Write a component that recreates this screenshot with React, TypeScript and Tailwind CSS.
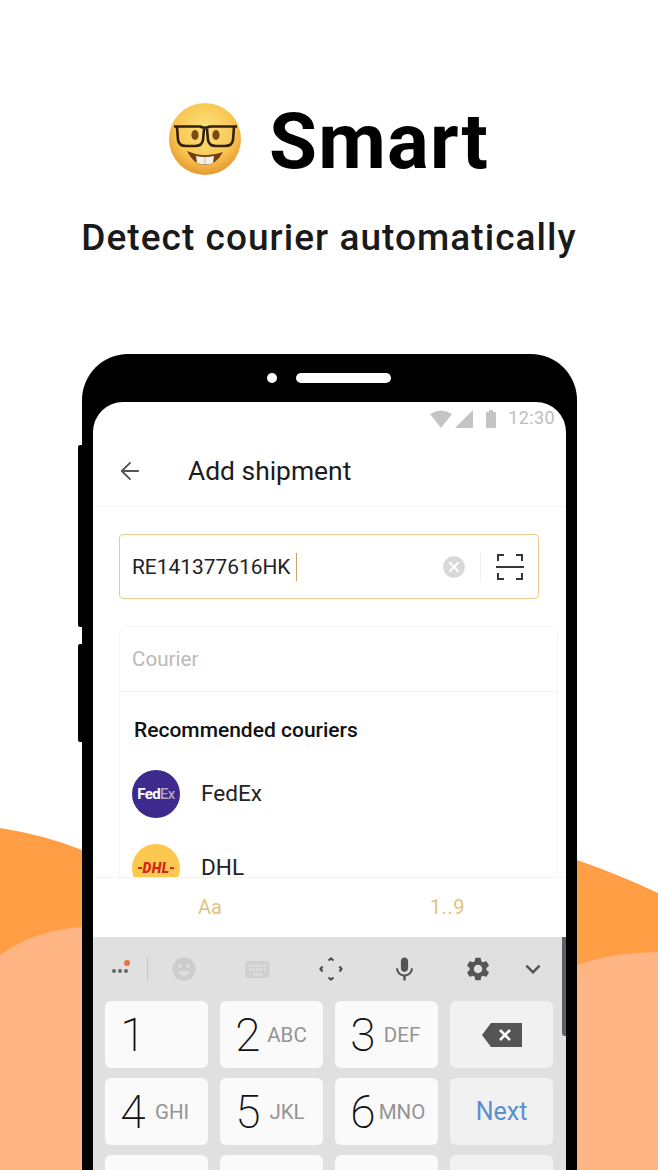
import { ArrowLeft } from "lucide-react";
import {
  MdCancel,
  MdEmojiEmotions,
  MdKeyboard,
  MdKeyboardArrowDown,
  MdMic,
  MdSettings,
} from "react-icons/md";

const keys = [
  { digit: "1", sub: "" },
  { digit: "2", sub: "ABC" },
  { digit: "3", sub: "DEF" },
  null,
  { digit: "4", sub: "GHI" },
  { digit: "5", sub: "JKL" },
  { digit: "6", sub: "MNO" },
  null,
];

const NerdEmoji = () => (
  <svg viewBox="0 0 74 74" className="h-[74px] w-[74px] shrink-0">
    <defs>
      <radialGradient id="face" cx="50%" cy="38%" r="62%">
        <stop offset="0%" stopColor="#fde37e" />
        <stop offset="65%" stopColor="#f9c652" />
        <stop offset="100%" stopColor="#e5982e" />
      </radialGradient>
    </defs>
    <circle cx="37" cy="37" r="36" fill="url(#face)" />
    <path d="M19 49 Q37 57 55 50 Q48 63 37 63 Q26 63 19 49Z" fill="#6e3d12" />
    <path d="M28 54 Q37 56 46 54 L45 61 Q37 64 29 61Z" fill="#f3efe6" />
    <path d="M37 55 V63" stroke="#b9ab94" strokeWidth="0.8" />
    <ellipse cx="27" cy="33" rx="3.6" ry="5" fill="#7a4a18" />
    <ellipse cx="48" cy="33" rx="3.6" ry="5" fill="#7a4a18" />
    <path
      d="M6 24.5 H32 Q37 27 42 24.5 H69 M9 25 L10 38 Q11 44 18 44 H27 Q34 44 35 38 L36 27 M39 27 L40 38 Q41 44 48 44 H57 Q64 44 65 38 L66 25"
      fill="none"
      stroke="#33200d"
      strokeWidth="2.6"
    />
  </svg>
);

const WifiFilled = () => (
  <svg viewBox="0 0 22 18" className="h-[18px] w-[22px]" fill="#c4c4c4">
    <path d="M0 4 Q11 -3 22 4 L11 18Z" />
  </svg>
);

const SignalFilled = () => (
  <svg viewBox="0 0 18 18" className="ml-[3px] h-[18px] w-[18px]" fill="#c4c4c4">
    <path d="M18 0 V18 H0Z" />
  </svg>
);

const ScanIcon = () => (
  <svg viewBox="0 0 28 28" className="h-[28px] w-[28px]" fill="none" stroke="#33373d" strokeWidth="2">
    <path d="M2 8 V2 H8 M20 2 H26 V8 M2 20 V26 H8 M20 26 H26 V20" />
    <path d="M0 14 H28" />
  </svg>
);

const MoveIcon = () => (
  <svg viewBox="0 0 24 24" className="h-[24px] w-[24px]" fill="none" stroke="#4d4d4d" strokeWidth="2.2">
    <path d="M9.5 3.5 L12 1.5 L14.5 3.5 M9.5 20.5 L12 22.5 L14.5 20.5 M3.5 9.5 L1.5 12 L3.5 14.5 M20.5 9.5 L22.5 12 L20.5 14.5" />
  </svg>
);

const BackspaceIcon = () => (
  <svg viewBox="0 0 40 24" className="h-[24px] w-[40px]">
    <path d="M9 0 H40 V24 H9 L0 12Z" fill="#555" />
    <path d="M18 7 L28 17 M28 7 L18 17" stroke="#fff" strokeWidth="2.6" />
  </svg>
);

export default function App() {
  return (
    <div className="relative h-[1170px] w-[658px] overflow-hidden bg-white font-['Roboto',sans-serif]">
      {/* orange waves behind the phone */}
      <svg viewBox="0 0 658 1170" className="absolute inset-0 h-full w-full">
        <path d="M0 828 Q45 835 82 850 L82 1170 L0 1170Z" fill="#ff9e44" />
        <path d="M577 860 Q620 875 658 893 L658 1170 L577 1170Z" fill="#ff9e44" />
        <path d="M0 955 Q35 930 82 927 L82 1170 L0 1170Z" fill="#ffb583" />
        <path d="M577 965 Q610 953 658 952 L658 1170 L577 1170Z" fill="#ffb583" />
      </svg>

      <div className="relative">
        <div className="flex h-[180px] items-end pl-[168px]">
          <div className="mb-[4px]">
            <NerdEmoji />
          </div>
          <h1 className="ml-[27px] text-[78px] leading-[76px] font-bold tracking-[1.2px] text-black">Smart</h1>
        </div>
        <p className="mt-[33px] text-center text-[37px] leading-[50px] font-medium tracking-[1.05px] text-[#1a1a1a]">
          Detect courier automatically
        </p>

        {/* phone */}
        <div className="relative mt-[91px] ml-[82px] w-[495px] rounded-t-[46px] bg-black px-[11px] pt-[48px]">
          <div className="absolute top-[91px] -left-[4px] h-[182px] w-[4px] rounded-l-[2px] bg-black" />
          <div className="absolute top-[290px] -left-[4px] h-[98px] w-[4px] rounded-l-[2px] bg-black" />
          <div className="absolute top-[19px] left-[185px] h-[10px] w-[10px] rounded-full bg-white" />
          <div className="absolute top-[19px] left-[214px] h-[10px] w-[95px] rounded-full bg-white" />

          <div className="h-[768px] overflow-hidden rounded-t-[30px] bg-white">
            <div className="flex h-[35px] items-end justify-end pr-[11px] pb-[7px] text-[#bdbdbd]">
              <span className="mb-[2px] flex">
                <WifiFilled />
                <SignalFilled />
              </span>
              <span className="relative mb-[2px] ml-[13px] h-[16px] w-[10px] rounded-[1px] bg-[#c4c4c4]">
                <span className="absolute -top-[2px] left-[3px] h-[2px] w-[4px] bg-[#c4c4c4]" />
              </span>
              <span className="ml-[12px] text-[18px] leading-[24px] tracking-[0.4px]">12:30</span>
            </div>

            <div className="flex h-[70px] items-center border-b border-[#f6f6f6] pb-[2px] pl-[23px]">
              <ArrowLeft className="h-[28px] w-[28px] text-[#555]" strokeWidth={1.6} />
              <span className="ml-[44px] text-[26.4px] leading-[32px] text-[#1c1c1c]">Add shipment</span>
            </div>

            <div className="mx-[26px] mt-[27px] flex h-[65px] w-[420px] items-center rounded-[4px] border border-[#eeca8c] pl-[12px]">
              <span className="w-[159px] text-[20.9px] leading-[28px] whitespace-nowrap text-[#222]">RE141377616HK</span>
              <span className="ml-[5px] h-[28px] w-[1px] bg-[#c9a35f]" />
              <MdCancel className="ml-[144px] text-[26px] text-[#d8d8d8]" />
              <span className="ml-[13px] h-[30px] w-[1px] bg-[#f0f0f0]" />
              <span className="ml-[15px]">
                <ScanIcon />
              </span>
            </div>

            <div className="relative mt-[27px] ml-[26px] h-[251px] w-[439px] overflow-hidden rounded-t-[8px] border-x border-t border-[#f5f5f5]">
              <div className="flex h-[65px] items-center border-b border-[#f3f3f3] pl-[12px] text-[20.6px] text-[#b9b9b9]">
                Courier
              </div>
              <div className="mt-[26px] pl-[14px] text-[21px] leading-[24px] font-medium text-[#111]">
                Recommended couriers
              </div>
              <div className="mt-[28px] flex items-center pl-[12px]">
                <div className="flex h-[48px] w-[48px] items-center justify-center rounded-full bg-[#3d2a8c] text-[15px] font-bold tracking-[-0.6px] text-white">
                  Fed<span className="font-medium text-[#b3a3c0]">Ex</span>
                </div>
                <span className="ml-[21px] text-[22.6px] text-[#222]">FedEx</span>
              </div>
              <div className="mt-[26px] flex items-center pl-[12px]">
                <div className="flex h-[48px] w-[48px] items-center justify-center gap-[1px] rounded-full bg-[#fcc850] text-[14px] font-black tracking-[0.4px] text-[#d0261c] italic">
                  <span className="h-[2px] w-[4px] bg-[#d0261c]" />
                  DHL
                  <span className="h-[2px] w-[4px] bg-[#d0261c]" />
                </div>
                <span className="ml-[21px] text-[22.6px] text-[#222]">DHL</span>
              </div>
            </div>

            <div className="flex h-[60px] items-center border-t border-[#f3f3f3] pb-[2px] text-[20px] text-[#e3c27f]">
              <span className="ml-[105px]">Aa</span>
              <span className="ml-[208px] tracking-[0.5px]">1..9</span>
            </div>

            <div className="relative h-[233px] bg-[#e0e0e0]">
              <div className="absolute top-0 right-0 h-[99px] w-[4px] rounded-bl-[3px] bg-[#5f6067]" />
              <div className="flex h-[64px] items-center">
                <div className="relative ml-[7px] flex h-[40px] w-[40px] items-center justify-center pt-[4px]">
                  <span className="flex gap-[2px]">
                    <span className="h-[4px] w-[4px] rounded-full bg-[#666]" />
                    <span className="h-[4px] w-[4px] rounded-full bg-[#666]" />
                    <span className="h-[4px] w-[4px] rounded-full bg-[#666]" />
                  </span>
                  <span className="absolute top-[11px] left-[24px] h-[6px] w-[6px] rounded-full bg-[#e8743b]" />
                </div>
                <span className="ml-[7px] h-[24px] w-[1px] bg-[#c8c8c8]" />
                <div className="ml-[16px] flex w-[40px] justify-center">
                  <MdEmojiEmotions className="text-[28px] text-[#cdcdcd]" />
                </div>
                <div className="ml-[33px] flex w-[40px] justify-center">
                  <MdKeyboard className="text-[29px] text-[#d0d0d0]" />
                </div>
                <div className="ml-[34px] flex w-[40px] justify-center">
                  <MoveIcon />
                </div>
                <div className="ml-[33px] flex w-[40px] justify-center">
                  <MdMic className="text-[29px] text-[#555]" />
                </div>
                <div className="ml-[34px] flex w-[40px] justify-center">
                  <MdSettings className="text-[28px] text-[#555]" />
                </div>
                <div className="ml-[15px] flex w-[40px] justify-center">
                  <MdKeyboardArrowDown className="text-[30px] text-[#555]" />
                </div>
              </div>

              <div className="grid grid-cols-[repeat(4,103px)] auto-rows-[67px] gap-x-[12px] gap-y-[10px] pl-[12px]">
                {keys.map((k, i) =>
                  k ? (
                    <div key={i} className="flex items-center rounded-[6px] bg-[#fafafa] pl-[5px]">
                      <span className="w-[46px] text-center text-[46px] leading-[50px] font-extralight text-[#111]">
                        {k.digit}
                      </span>
                      <span className="flex w-[32px] justify-center text-[20.5px] leading-[26px] text-[#949494]">
                        {k.sub}
                      </span>
                    </div>
                  ) : i === 3 ? (
                    <div key={i} className="flex items-center justify-center rounded-[6px] bg-[#f1f1f1]">
                      <BackspaceIcon />
                    </div>
                  ) : (
                    <div
                      key={i}
                      className="flex items-center justify-center rounded-[6px] bg-[#f1f1f1] text-[25px] text-[#5b8fd1]"
                    >
                      Next
                    </div>
                  ),
                )}
                <div className="rounded-[6px] bg-[#fafafa]" />
                <div className="rounded-[6px] bg-[#fafafa]" />
                <div className="rounded-[6px] bg-[#fafafa]" />
                <div className="rounded-[6px] bg-[#f1f1f1]" />
              </div>
            </div>
          </div>
        </div>
      </div>
    </div>
  );
}
